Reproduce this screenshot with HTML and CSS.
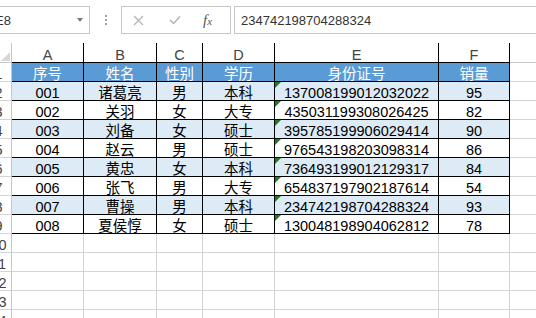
FILE: index.html
```html
<!DOCTYPE html>
<html lang="zh">
<head>
<meta charset="utf-8">
<title>Sheet</title>
<link rel="stylesheet" href="styles.css">
</head>
<body>
<div class="toolbar">
  <div class="namebox"><span class="val">E8</span><span class="arrow"></span></div>
  <div class="dots"><i></i><i></i><i></i></div>
  <div class="fxbox">
    <svg class="ico-x" width="11" height="11" viewBox="0 0 11 11"><path d="M1 1 L10 10 M10 1 L1 10" stroke="#b4b4b4" stroke-width="1.3" fill="none"/></svg>
    <svg class="ico-ok" width="12" height="10" viewBox="0 0 12 10"><path d="M1 5 L4.5 8.5 L11 1.5" stroke="#b4b4b4" stroke-width="1.5" fill="none"/></svg>
    <span class="fx"><i>f</i><i class="sub">x</i></span>
  </div>
  <div class="formula">234742198704288324</div>
</div>
<div class="sheet">
  <div class="c corner"><svg width="9" height="9" viewBox="0 0 9 9"><polygon points="9,0 9,9 0,9" fill="#d8d8d8"/></svg></div>
  <div class="c colhead t">A</div><div class="c colhead t">B</div><div class="c colhead t">C</div><div class="c colhead t">D</div><div class="c colhead t">E</div><div class="c colhead t">F</div><div class="c colhead"></div>

  <div class="c rowhead"><span>1</span></div>
  <div class="c t hd">序号</div><div class="c t hd">姓名</div><div class="c t hd">性别</div><div class="c t hd">学历</div><div class="c t hd">身份证号</div><div class="c t hd">销量</div><div class="c"></div>

  <div class="c rowhead"><span>2</span></div>
  <div class="c t alt">001</div><div class="c t alt">诸葛亮</div><div class="c t alt">男</div><div class="c t alt">本科</div><div class="c t alt id">137008199012032022</div><div class="c t alt">95</div><div class="c"></div>

  <div class="c rowhead"><span>3</span></div>
  <div class="c t">002</div><div class="c t">关羽</div><div class="c t">女</div><div class="c t">大专</div><div class="c t id">435031199308026425</div><div class="c t">82</div><div class="c"></div>

  <div class="c rowhead"><span>4</span></div>
  <div class="c t alt">003</div><div class="c t alt">刘备</div><div class="c t alt">女</div><div class="c t alt">硕士</div><div class="c t alt id">395785199906029414</div><div class="c t alt">90</div><div class="c"></div>

  <div class="c rowhead"><span>5</span></div>
  <div class="c t">004</div><div class="c t">赵云</div><div class="c t">男</div><div class="c t">硕士</div><div class="c t id">976543198203098314</div><div class="c t">86</div><div class="c"></div>

  <div class="c rowhead"><span>6</span></div>
  <div class="c t alt">005</div><div class="c t alt">黄忠</div><div class="c t alt">女</div><div class="c t alt">本科</div><div class="c t alt id">736493199012129317</div><div class="c t alt">84</div><div class="c"></div>

  <div class="c rowhead"><span>7</span></div>
  <div class="c t">006</div><div class="c t">张飞</div><div class="c t">男</div><div class="c t">大专</div><div class="c t id">654837197902187614</div><div class="c t">54</div><div class="c"></div>

  <div class="c rowhead"><span>8</span></div>
  <div class="c t alt">007</div><div class="c t alt">曹操</div><div class="c t alt">男</div><div class="c t alt">本科</div><div class="c t alt id">234742198704288324</div><div class="c t alt">93</div><div class="c"></div>

  <div class="c rowhead"><span>9</span></div>
  <div class="c t">008</div><div class="c t">夏侯惇</div><div class="c t">女</div><div class="c t">硕士</div><div class="c t id">130048198904062812</div><div class="c t">78</div><div class="c"></div>

  <div class="c rowhead"><span>10</span></div>
  <div class="c"></div><div class="c"></div><div class="c"></div><div class="c"></div><div class="c"></div><div class="c"></div><div class="c"></div>
  <div class="c rowhead"><span>11</span></div>
  <div class="c"></div><div class="c"></div><div class="c"></div><div class="c"></div><div class="c"></div><div class="c"></div><div class="c"></div>
  <div class="c rowhead"><span>12</span></div>
  <div class="c"></div><div class="c"></div><div class="c"></div><div class="c"></div><div class="c"></div><div class="c"></div><div class="c"></div>
  <div class="c rowhead"><span>13</span></div>
  <div class="c"></div><div class="c"></div><div class="c"></div><div class="c"></div><div class="c"></div><div class="c"></div><div class="c"></div>
  <div class="c rowhead"><span>14</span></div>
  <div class="c"></div><div class="c"></div><div class="c"></div><div class="c"></div><div class="c"></div><div class="c"></div><div class="c"></div>
</div>
</body>
</html>
```
FILE: styles.css
```css
* { box-sizing: border-box; margin: 0; padding: 0; }
html, body { width: 536px; height: 318px; overflow: hidden; background: #fff; }
body { font-family: "Liberation Sans", "Noto Sans CJK SC", sans-serif; }

.toolbar { display: flex; align-items: flex-start; height: 43px; padding-top: 6px; }
.namebox { flex: none; width: 110px; height: 28px; margin-left: -20px; border: 1px solid #c6c6c6;
  display: flex; align-items: center; padding: 0 6px 0 14px; font-size: 13px; color: #333; }
.namebox .val { flex: 1; }
.arrow { width: 0; height: 0; border-left: 3px solid transparent; border-right: 3px solid transparent; border-top: 4px solid #7a7a7a; }
.dots { flex: none; width: 31px; height: 28px; display: flex; flex-direction: column; align-items: center; justify-content: center; gap: 2px; }
.dots i { display: block; width: 2px; height: 2px; background: #a0a0a0; }
.fxbox { flex: none; width: 110px; height: 28px; border: 1px solid #c6c6c6; display: flex; align-items: center; padding-left: 11px; }
.ico-x { margin-right: 25px; }
.ico-ok { margin-right: 22px; }
.fx { font-family: "Liberation Serif", serif; color: #555; font-size: 15px; line-height: 1; display: flex; align-items: baseline; }
.fx .sub { font-size: 11px; margin-left: 0; }
.formula { flex: 1; margin-left: 3px; margin-right: -20px; height: 28px; border: 1px solid #c6c6c6; padding-left: 6px;
  display: flex; align-items: center; font-size: 13px; color: #333; }

.sheet { display: grid; grid-template-columns: 12px 72px 73px 46px 72px 164px 71px 72px; grid-template-rows: 20px repeat(14, 19px); }
.c { border-right: 1px solid #d4d4d4; border-bottom: 1px solid #d4d4d4; display: flex; align-items: flex-end; justify-content: center;
  font-size: 14.5px; line-height: 13px; color: #000; white-space: nowrap; }
.corner { border-right-color: #c6c6c6; border-bottom-color: #c6c6c6; justify-content: flex-end; padding: 0 1px 1px 0; }
.colhead { color: #444; border-bottom-color: #c6c6c6; }
.colhead.t { border-bottom-color: #000; }
.rowhead { border-right-color: #c6c6c6; overflow: hidden; justify-content: flex-start; color: #444; }
.rowhead span { flex: none; width: 25px; margin-left: -14px; text-align: center; }
.t { border-right-color: #000; border-bottom-color: #000; }
.hd { background: #5b9bd5; color: #fff; }
.alt { background: #ddebf7; }
.id { position: relative; }
.id::before { content: ""; position: absolute; top: 0; left: 0; border-top: 6px solid #1e7d1e; border-right: 6px solid transparent; }
```
